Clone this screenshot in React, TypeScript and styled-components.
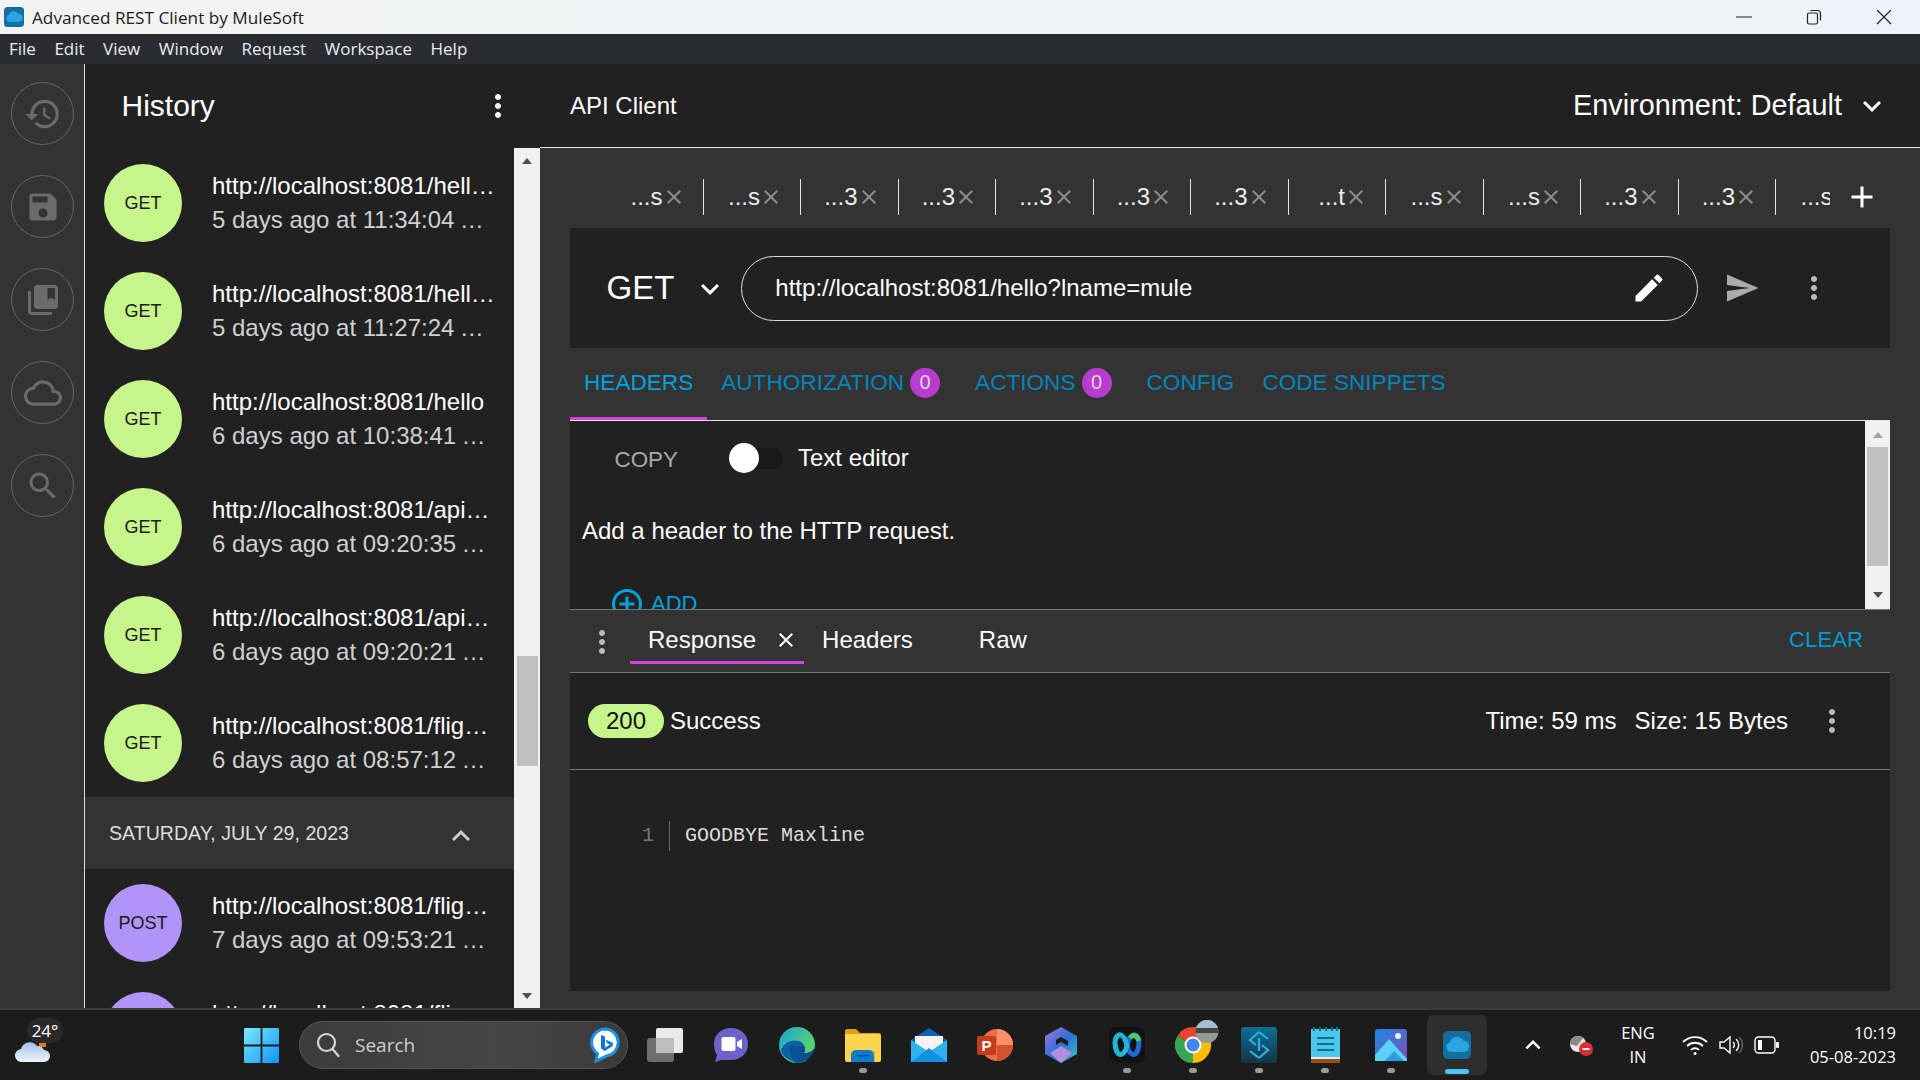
import React from 'react'
import styled, { createGlobalStyle } from 'styled-components'
import {
  MdAdd,
  MdAddCircleOutline,
  MdClose,
  MdCloudQueue,
  MdEdit,
  MdHistory,
  MdKeyboardArrowDown,
  MdKeyboardArrowUp,
  MdMoreVert,
  MdSave,
  MdSearch,
  MdSend,
} from 'react-icons/md'

const GlobalStyle = createGlobalStyle`
  html, body {
    margin: 0;
    padding: 0;
    background: #212121;
    font-family: "Liberation Sans", Arial, sans-serif;
  }
  * { box-sizing: border-box; }
`

const Page = styled.div`
  width: 1920px;
  height: 1080px;
  display: flex;
  flex-direction: column;
  overflow: hidden;
`

const TitleBar = styled.div`
  height: 34px;
  flex: none;
  display: flex;
  align-items: center;
  padding-left: 4px;
  background: linear-gradient(90deg, #f3f3f2 0%, #f1f3f5 50%, #edf3fa 100%);
  color: #1b1b1b;
  font-family: "Open Sans", sans-serif;
  font-size: 17.2px;
`

const TitleText = styled.span`
  margin-left: 8px;
`

const WindowButtons = styled.div`
  margin-left: auto;
  display: flex;
  align-items: center;
  gap: 54px;
  padding-right: 28px;
`

const MenuBar = styled.div`
  height: 30px;
  flex: none;
  display: flex;
  align-items: center;
  gap: 18.5px;
  padding: 0 0 2px 9px;
  background: #2a2c31;
  color: #e9edf1;
  font-family: "Open Sans", sans-serif;
  font-size: 17px;
`

const Main = styled.div`
  flex: 1;
  min-height: 0;
  display: flex;
`

const Rail = styled.nav`
  width: 85px;
  flex: none;
  padding: 18px 0 0 11px;
  background: #333;
  border-right: 1.5px solid #ddd;
  display: flex;
  flex-direction: column;
  gap: 30px;
`

const RailButton = styled.div`
  width: 63px;
  height: 63px;
  border-radius: 50%;
  border: 1px solid #666;
  color: #6b6b6b;
  display: flex;
  align-items: center;
  justify-content: center;
`

const HistoryPanel = styled.aside`
  width: 455px;
  flex: none;
  background: #212121;
  display: flex;
  flex-direction: column;
`

const HistoryHeader = styled.div`
  height: 84px;
  flex: none;
  display: flex;
  align-items: center;
  padding: 0 24px 0 36.5px;
  color: #fff;
  font-size: 30px;
  justify-content: space-between;
`

const HistoryBody = styled.div`
  flex: 1;
  min-height: 0;
  display: flex;
`

const HistoryList = styled.div`
  flex: 1;
  min-width: 0;
  overflow: hidden;
  padding-top: 1px;
`

const Row = styled.div`
  height: 108px;
  display: flex;
  align-items: center;
  padding: 0 18px 0 19px;
`

const Method = styled.div<{ $post?: boolean }>`
  width: 78px;
  height: 78px;
  flex: none;
  border-radius: 50%;
  background: ${({ $post }) => ($post ? '#b094f8' : '#c6f58b')};
  color: #1a1a1a;
  font-size: 18px;
  display: flex;
  align-items: center;
  justify-content: center;
`

const RowText = styled.div`
  margin-left: 30px;
  flex: 1;
  min-width: 0;
  font-size: 24px;
  line-height: 34.5px;
`

const RowUrl = styled.div`
  color: #fff;
  white-space: nowrap;
  overflow: hidden;
  text-overflow: ellipsis;
`

const RowDate = styled(RowUrl)`
  color: #d0d0d0;
`

const DayHeader = styled.div`
  height: 72px;
  display: flex;
  align-items: center;
  justify-content: space-between;
  padding: 0 35px 0 24px;
  background: #333;
  color: #ddd;
  font-size: 19.6px;
`

const DayChevron = styled.div`
  color: #ccc;
  height: 36px;
  margin-top: 6px;
`

const Track = styled.div<{ $width: number; $top: number; $bottom: number }>`
  width: ${({ $width }) => $width}px;
  flex: none;
  background: #f1f1f1;
  display: flex;
  flex-direction: column;
  align-items: center;
  padding: ${({ $top }) => $top}px 0 ${({ $bottom }) => $bottom}px;
`

const Thumb = styled.div<{ $offset: number; $height: number }>`
  width: 21px;
  height: ${({ $height }) => $height}px;
  margin-top: ${({ $offset }) => $offset}px;
  background: #c0c0c0;
`

const ArrowUp = styled.div<{ $faded?: boolean }>`
  width: 0;
  height: 0;
  border-left: 5.5px solid transparent;
  border-right: 5.5px solid transparent;
  border-bottom: 6px solid ${({ $faded }) => ($faded ? '#a3a3a3' : '#505050')};
`

const ArrowDown = styled.div`
  margin-top: auto;
  width: 0;
  height: 0;
  border-left: 5.5px solid transparent;
  border-right: 5.5px solid transparent;
  border-top: 6px solid #505050;
`

const Workspace = styled.main`
  flex: 1;
  min-width: 0;
  display: flex;
  flex-direction: column;
  background: #333;
`

const AppHeader = styled.header`
  height: 84px;
  flex: none;
  display: flex;
  align-items: center;
  justify-content: space-between;
  padding: 0 30px;
  background: #212121;
  border-bottom: 1px solid #e4e4e4;
  color: #fff;
  font-size: 24px;
`

const EnvSelect = styled.div`
  display: flex;
  align-items: center;
  gap: 12px;
  font-size: 28.8px;
`

const Body = styled.div`
  flex: 1;
  min-height: 0;
  display: flex;
  flex-direction: column;
  padding: 0 30px 17px;
`

const TabsRow = styled.div`
  height: 80px;
  flex: none;
  display: flex;
  align-items: flex-start;
  padding: 31px 0 0 36px;
`

const TabList = styled.div`
  width: 1224px;
  flex: none;
  display: flex;
  overflow: hidden;
`

const Tab = styled.div`
  width: 97.5px;
  height: 36px;
  flex: none;
  display: flex;
  align-items: center;
  justify-content: flex-end;
  padding-right: 17px;
  border-right: 1.5px solid #e4e4e4;
  color: #eee;
  font-size: 24px;
`

const TabClose = styled.span`
  color: #8c8c8c;
  display: flex;
  margin-left: -1px;
`

const PlusButton = styled.div`
  margin-left: 14px;
  height: 36px;
  color: #fff;
`

const UrlBar = styled.div`
  height: 120px;
  flex: none;
  display: flex;
  align-items: center;
  padding-left: 36.5px;
  background: #212121;
  color: #fff;
`

const MethodLabel = styled.span`
  font-size: 33px;
`

const MethodChevron = styled.span`
  display: flex;
  margin: 2px 12.5px 0 18px;
`

const UrlInput = styled.div`
  width: 957.5px;
  height: 65px;
  flex: none;
  display: flex;
  align-items: center;
  justify-content: space-between;
  padding: 0 30px 0 33.5px;
  border: 1px solid #ddd;
  border-radius: 33px;
  font-size: 24px;
`

const IconSlot = styled.span<{ $left?: number; $color?: string }>`
  display: flex;
  flex: none;
  margin-left: ${({ $left }) => $left ?? 0}px;
  color: ${({ $color }) => $color ?? '#bbb'};
`

const RequestTabs = styled.div`
  height: 72px;
  flex: none;
  display: flex;
`

const RequestTab = styled.div<{ $active?: boolean }>`
  display: flex;
  align-items: center;
  padding: 0 14px;
  font-size: 22.6px;
  color: ${({ $active }) => ($active ? '#00a2df' : '#0086bd')};
  border-bottom: 3px solid ${({ $active }) => ($active ? '#d63fe0' : 'transparent')};
`

const Badge = styled.span`
  width: 30px;
  height: 30px;
  margin: 0 7px 0 6px;
  border-radius: 50%;
  background: #b93bd0;
  color: #d9d9d9;
  display: flex;
  align-items: center;
  justify-content: center;
  font-size: 20px;
`

const RequestPanel = styled.section`
  height: 190px;
  flex: none;
  display: flex;
  background: #212121;
  border-top: 1px solid #e4e4e4;
  border-bottom: 1px solid #777;
`

const RequestContent = styled.div`
  flex: 1;
  min-width: 0;
  overflow: hidden;
  padding: 19px 0 0 12px;
`

const EditorRow = styled.div`
  height: 36px;
  display: flex;
  align-items: center;
  padding-left: 32.5px;
  color: #fff;
  font-size: 24px;
`

const CopyButton = styled.span`
  font-size: 22.4px;
  color: #aaa;
  margin-top: 3px;
`

const Toggle = styled.div`
  position: relative;
  width: 51px;
  height: 21px;
  margin: 0 15px 0 54px;
  border-radius: 11px;
  background: #191919;
`

const ToggleKnob = styled.div`
  position: absolute;
  left: -3px;
  top: -5px;
  width: 30px;
  height: 30px;
  border-radius: 50%;
  background: #fff;
`

const HelpText = styled.p`
  margin: 41px 0 0;
  color: #fff;
  font-size: 24px;
  line-height: 28px;
`

const AddRow = styled.div`
  margin: 41px 0 0 27px;
  display: flex;
  align-items: center;
  color: #00a2df;
  font-size: 22px;
`

const AddLabel = styled.span`
  margin-left: 6px;
`

const ResponseBar = styled.div`
  height: 63px;
  flex: none;
  display: flex;
  align-items: flex-start;
  padding-left: 14px;
  border-bottom: 1px solid #777;
`

const BarDots = styled.span`
  display: flex;
  margin: 14px 10px 0 0;
  color: #bbb;
`

const ResponseTab = styled.div<{ $active?: boolean }>`
  height: 54px;
  display: flex;
  align-items: center;
  padding: 9px 6px 0 18px;
  color: #fff;
  font-size: 24px;
  border-bottom: 3px solid ${({ $active }) => ($active ? '#d63fe0' : 'transparent')};
`

const ResponseClose = styled.span<{ $hidden?: boolean }>`
  display: flex;
  margin-left: 18px;
  visibility: ${({ $hidden }) => ($hidden ? 'hidden' : 'visible')};
`

const ClearButton = styled.span`
  margin: 17px 27px 0 auto;
  color: #009ad6;
  font-size: 22.2px;
`

const StatusRow = styled.div`
  height: 97px;
  flex: none;
  display: flex;
  align-items: center;
  padding: 0 40px 0 18px;
  background: #212121;
  border-bottom: 1px solid #777;
  color: #fff;
  font-size: 24px;
`

const StatusPill = styled.span`
  width: 76px;
  height: 34px;
  border-radius: 17px;
  background: #c6f58b;
  color: #111;
  display: flex;
  align-items: center;
  justify-content: center;
  margin-right: 6px;
`

const Timing = styled.span`
  margin-left: auto;
  display: flex;
  gap: 18px;
`

const EditorArea = styled.div`
  flex: 1;
  min-height: 0;
  display: flex;
  align-items: flex-start;
  padding-top: 51px;
  background: #212121;
  font-family: "Liberation Mono", "Courier New", monospace;
  font-size: 20px;
  line-height: 30px;
`

const Gutter = styled.div`
  width: 100px;
  padding-right: 15px;
  text-align: right;
  color: #777;
  border-right: 1px solid #666;
`

const Code = styled.div`
  padding-left: 15px;
  color: #ddd;
`

const Taskbar = styled.footer`
  height: 72px;
  flex: none;
  display: flex;
  align-items: center;
  background: #1c1c1c;
  border-top: 2px solid #3b3b3b;
  color: #fff;
  font-family: "Open Sans", "Noto Sans", sans-serif;
`

const Weather = styled.div`
  position: relative;
  width: 228px;
  height: 100%;
  flex: none;
`

const WeatherCloud = styled.svg`
  position: absolute;
  left: 15px;
  top: 30px;
`

const WeatherBadge = styled.div`
  position: absolute;
  left: 27px;
  top: 8px;
  width: 36px;
  height: 25px;
  border-radius: 13px;
  background: #2a2a2a;
  display: flex;
  align-items: center;
  justify-content: center;
  font-size: 17px;
`

const SearchBox = styled.div`
  width: 329px;
  height: 48px;
  flex: none;
  margin: 0 4px 0 5px;
  display: flex;
  align-items: center;
  padding: 0 7px 0 16px;
  border-radius: 24px;
  border: 1px solid #565656;
  background: linear-gradient(90deg, #3c3c3c, #454545 60%, #3a3a3a);
  color: #cfcfcf;
  font-size: 19px;
`

const SearchLabel = styled.span`
  margin-left: 15px;
  flex: 1;
`

const AppSlot = styled.div<{ $active?: boolean }>`
  position: relative;
  width: 66px;
  height: 60px;
  flex: none;
  display: flex;
  align-items: center;
  justify-content: center;
  border-radius: 8px;
  border-left: 3px solid transparent;
  border-right: 3px solid transparent;
  background: ${({ $active }) => ($active ? '#2e2e2e' : 'transparent')};
  background-clip: padding-box;
`

const ChromeWrap = styled.span`
  display: flex;
  margin: 0 0 12px 8px;
`

const RunDot = styled.span<{ $active?: boolean }>`
  position: absolute;
  bottom: ${({ $active }) => ($active ? 1 : 2)}px;
  left: 50%;
  transform: translateX(-50%);
  width: ${({ $active }) => ($active ? 24 : 8)}px;
  height: 5px;
  border-radius: 3px;
  background: ${({ $active }) => ($active ? '#4cc2ff' : '#9a9a9a')};
`

const Tray = styled.div`
  flex: 1;
  display: flex;
  align-items: center;
  padding-left: 28px;
`

const TrayLang = styled.div`
  margin-left: 19px;
  width: 50px;
  text-align: center;
  font-size: 16.5px;
  line-height: 24px;
`

const TrayIcons = styled.div`
  margin-left: 19px;
  display: flex;
  align-items: center;
  gap: 11px;
`

const Clock = styled.div`
  margin-left: auto;
  padding-right: 24px;
  text-align: right;
  white-space: nowrap;
  font-size: 16.5px;
  line-height: 24px;
`

const rows = [
  { method: 'GET', url: 'http://localhost:8081/hello?fname=Max', date: '5 days ago at 11:34:04 AM IST' },
  { method: 'GET', url: 'http://localhost:8081/hello?lname=mule', date: '5 days ago at 11:27:24 AM IST' },
  { method: 'GET', url: 'http://localhost:8081/hello', date: '6 days ago at 10:38:41 AM IST' },
  { method: 'GET', url: 'http://localhost:8081/apis/customers', date: '6 days ago at 09:20:35 AM IST' },
  { method: 'GET', url: 'http://localhost:8081/apis/orders', date: '6 days ago at 09:20:21 AM IST' },
  { method: 'GET', url: 'http://localhost:8081/flights', date: '6 days ago at 08:57:12 AM IST' },
]

const oldRows = [
  { method: 'POST', url: 'http://localhost:8081/flights', date: '7 days ago at 09:53:21 AM IST' },
  { method: 'POST', url: 'http://localhost:8081/flights', date: '7 days ago at 09:50:02 AM IST' },
]

const tabs = ['s', 's', '3', '3', '3', '3', '3', 't', 's', 's', '3', '3', 's']

const HistoryRow = ({ method, url, date }: { method: string; url: string; date: string }) => (
  <Row>
    <Method $post={method === 'POST'}>{method}</Method>
    <RowText>
      <RowUrl>{url}</RowUrl>
      <RowDate>{date}</RowDate>
    </RowText>
  </Row>
)

const CollectionsIcon = () => (
  <svg width="36" height="36" viewBox="0 0 24 24" fill="currentColor">
    <path d="M4 6H2v14c0 1.1.9 2 2 2h14v-2H4V6zm16-4H8c-1.1 0-2 .9-2 2v12c0 1.1.9 2 2 2h12c1.1 0 2-.9 2-2V4c0-1.1-.9-2-2-2zm0 10l-2.5-1.5L15 12V4h5v8z" />
  </svg>
)

const ArcLogo = ({ size }: { size: number }) => (
  <svg width={size} height={size} viewBox="0 0 28 28">
    <rect width="28" height="28" rx="5" fill="#126f9f" />
    <path d="M8 21a5 5 0 0 1-1-9.8A7 7 0 0 1 20 9.6a5.7 5.7 0 0 1 1 11.4z" fill="#2aa5e2" />
  </svg>
)

const StartIcon = () => (
  <svg width="35" height="35" viewBox="0 0 35 35">
    <defs>
      <linearGradient id="win" x1="0" y1="0" x2="1" y2="1">
        <stop offset="0" stopColor="#7ee8ff" />
        <stop offset="1" stopColor="#0b96f5" />
      </linearGradient>
    </defs>
    <path d="M0 1a1 1 0 0 1 1-1h15.6v16.6H0zM18.4 0H34a1 1 0 0 1 1 1v15.6H18.4zM0 18.4h16.6V35H1a1 1 0 0 1-1-1zM18.4 18.4H35V34a1 1 0 0 1-1 1H18.4z" fill="url(#win)" />
  </svg>
)

const SearchGlass = () => (
  <svg width="24" height="26" viewBox="0 0 24 26" fill="none" stroke="#d8d8d8" strokeWidth="2.200">
    <circle cx="10.500" cy="10.500" r="8.500" />
    <path d="M16.500 17l6 7" strokeLinecap="round" />
  </svg>
)

const BingIcon = () => (
  <svg width="30" height="36" viewBox="0 0 30 36">
    <path d="M15 2a13.5 13.5 0 0 1 2 26.8L6 34l1.6-7.3A13.5 13.5 0 0 1 15 2z" fill="#fff" stroke="#1d8fe8" strokeWidth="3" />
    <path d="M11 8l4 1.5v11l5-3-3-1.2-1.2-3.6 7 3V19l-8 5-3.800-2.500z" fill="#1473d8" />
  </svg>
)

const TaskViewIcon = () => (
  <svg width="36" height="34" viewBox="0 0 36 34">
    <rect x="0" y="10" width="27" height="24" rx="3" fill="#6e6e6e" />
    <rect x="9" y="0" width="27" height="25" rx="2" fill="#e9e9e9" />
    <rect x="9" y="10" width="18" height="15" fill="#bdbdbd" />
  </svg>
)

const MeetIcon = () => (
  <svg width="34" height="36" viewBox="0 0 34 36">
    <path d="M17 1c9 0 17 6 17 16s-8 16-17 16H7l-6 2 2-7C1 25 0 21 0 17 0 7 8 1 17 1z" fill="#6b63c9" />
    <rect x="7.500" y="10" width="14" height="14" rx="2" fill="#fff" />
    <path d="M23 15l5-3v10l-5-3z" fill="#fff" />
  </svg>
)

const EdgeIcon = () => (
  <svg width="36" height="36" viewBox="0 0 36 36">
    <defs>
      <linearGradient id="edge" x1="0" y1="0" x2="1" y2="0.6">
        <stop offset="0" stopColor="#1aa3d8" />
        <stop offset="1" stopColor="#5fd56a" />
      </linearGradient>
    </defs>
    <circle cx="18" cy="18" r="18" fill="url(#edge)" />
    <path d="M2 24c2-8 10-12 18-10 3 1 5 3 5 5H15c-3 0-5 2-4 5 1 5 7 10 16 9a18 18 0 0 1-25-9z" fill="#0c5ea8" />
    <path d="M36 20c-2 5-8 7-12 6 2-1 3-3 1-7H15c-3 0-5 2-4 5 1 5 7 10 16 9l3 1c3-3 5-8 6-14z" fill="#1c1c1c" />
    <path d="M15 19h10c2 4 1 6-1 7 4 1 10-1 12-6-2 9-9 16-18 16-1 0-5-1-7-12-1-3 1-5 4-5z" fill="#0b4f96" />
  </svg>
)

const FilesIcon = () => (
  <svg width="36" height="34" viewBox="0 0 36 34">
    <path d="M0 3a2 2 0 0 1 2-2h9l4 4h19a2 2 0 0 1 2 2v5H0z" fill="#e0a10f" />
    <path d="M0 6h34a2 2 0 0 1 2 2v24a2 2 0 0 1-2 2H2a2 2 0 0 1-2-2z" fill="#fdd44f" />
    <rect x="6" y="23" width="24" height="11" fill="#f4b81f" />
    <path d="M6 34a2 2 0 0 1-0-1V27a5 5 0 0 1 5-5h13a5 5 0 0 1 5 5v7z" fill="#0c7bd0" />
    <rect x="12" y="27" width="12" height="1.500" fill="#083f73" />
  </svg>
)

const MailIcon = () => (
  <svg width="36" height="34" viewBox="0 0 36 34">
    <path d="M18 0L36 12v5H0v-5z" fill="#0b62b5" />
    <path d="M4 8h28v14H4z" fill="#f4f4f4" />
    <path d="M0 12l18 12L36 12v22H0z" fill="#2fb1f2" />
    <path d="M0 34L18 20l18 14z" fill="#1291e0" />
  </svg>
)

const PowerPointIcon = () => (
  <svg width="36" height="34" viewBox="0 0 36 34">
    <circle cx="20" cy="17" r="16" fill="#ed6c47" />
    <path d="M20 1a16 16 0 0 1 16 16H20z" fill="#ff8f6b" />
    <path d="M20 17h16a16 16 0 0 1-16 16z" fill="#d35230" />
    <rect x="0" y="8" width="19" height="19" rx="2" fill="#c43e1c" />
    <text x="9.500" y="23" textAnchor="middle" fontFamily="Liberation Sans" fontWeight="700" fontSize="15" fill="#fff">P</text>
  </svg>
)

const M365Icon = () => (
  <svg width="32" height="36" viewBox="0 0 32 36">
    <defs>
      <linearGradient id="m365" x1="0" y1="0" x2="1" y2="1">
        <stop offset="0" stopColor="#a974e0" />
        <stop offset="0.5" stopColor="#2f6fd6" />
        <stop offset="1" stopColor="#3ac3c4" />
      </linearGradient>
    </defs>
    <path d="M16 0l16 9v18l-16 9-16-9V9z" fill="url(#m365)" />
    <path d="M16 10l7 4v5l-7-4-5 3v-5z" fill="#1c1c1c" />
    <path d="M5 26l11-7 11 7-11 10z" fill="#b58ae0" />
  </svg>
)

const WebexIcon = () => (
  <svg width="36" height="36" viewBox="0 0 36 36">
    <rect width="36" height="36" rx="7" fill="#101214" />
    <path d="M30 14C30 31 21 31 18 19C21 5 28 5 30 14" fill="none" stroke="#2468d8" strokeWidth="5" />
    <path d="M6 14C6 31 15 31 18 19C15 5 8 5 6 14" fill="none" stroke="#1eb6d8" strokeWidth="5" />
    <path d="M21 11C24 7 28 8 30 14" fill="none" stroke="#58c46c" strokeWidth="5" />
  </svg>
)

const ChromeIcon = () => (
  <svg width="44" height="48" viewBox="0 0 44 48">
    <defs>
      <clipPath id="avatar">
        <circle cx="32" cy="16.600" r="11.500" />
      </clipPath>
    </defs>
    <path d="M18 30L2.400 21A18 18 0 0 1 33.600 21z" fill="#ea4335" />
    <path d="M18 30L33.600 21A18 18 0 0 1 18 48z" fill="#fbbc04" />
    <path d="M18 30L18 48A18 18 0 0 1 2.400 21z" fill="#34a853" />
    <circle cx="18" cy="30" r="8.500" fill="#fff" />
    <circle cx="18" cy="30" r="6.500" fill="#4285f4" />
    <g clipPath="url(#avatar)">
      <rect x="20" y="5" width="24" height="24" fill="#969a90" />
      <rect x="20" y="5" width="24" height="9" fill="#a9bdd6" />
      <rect x="20" y="13" width="24" height="5" fill="#43453f" />
    </g>
  </svg>
)

const TransferIcon = () => (
  <svg width="36" height="36" viewBox="0 0 36 36">
    <defs>
      <linearGradient id="transfer" x1="0" y1="0" x2="0" y2="1">
        <stop offset="0" stopColor="#0d6f96" />
        <stop offset="1" stopColor="#143645" />
      </linearGradient>
    </defs>
    <rect width="36" height="36" rx="3" fill="url(#transfer)" />
    <g fill="none" stroke="#27b2e6" strokeWidth="2.200">
      <path d="M18 5l-9 8 6 5M18 31l9-8-6-5" />
      <path d="M18 5l9 7M18 31l-9-7M18 11v13" />
    </g>
  </svg>
)

const NotepadIcon = () => (
  <svg width="29" height="36" viewBox="0 0 29 36">
    <rect y="2" width="29" height="29" fill="#4dc6ec" />
    <rect y="31" width="29" height="5" fill="#9c4f14" />
    <rect y="30" width="29" height="2" fill="#e8e8e8" />
    <path d="M3 0v4M9 0v4M15 0v4M21 0v4M26 0v4" stroke="#0b6f8e" strokeWidth="2" />
    <path d="M6 11h17M6 17h17M6 23h17" stroke="#0b6f8e" strokeWidth="2" />
  </svg>
)

const PhotosIcon = () => (
  <svg width="32" height="32" viewBox="0 0 32 32">
    <defs>
      <linearGradient id="photos" x1="0" y1="0" x2="1" y2="1">
        <stop offset="0" stopColor="#1d88e5" />
        <stop offset="1" stopColor="#7d4fb8" />
      </linearGradient>
    </defs>
    <rect width="32" height="32" rx="3" fill="url(#photos)" />
    <circle cx="23" cy="7" r="3" fill="#e6eef7" />
    <path d="M0 26L14 10l18 20v2H0z" fill="#5cd1f8" />
    <path d="M10 32l9-10 10 10z" fill="#2b9fe6" />
  </svg>
)

const OneDriveOff = () => (
  <svg width="26" height="22" viewBox="0 0 26 22">
    <circle cx="10" cy="10" r="8" fill="#e6e6e6" />
    <path d="M2 10a8 8 0 0 1 13-6l-6 8z" fill="#8a8a8a" />
    <circle cx="18" cy="15" r="7" fill="#dc2f35" />
    <rect x="14.500" y="14" width="7" height="2" fill="#fff" />
  </svg>
)

const WifiIcon = () => (
  <svg width="26" height="22" viewBox="0 0 26 22" fill="none" stroke="#fff" strokeWidth="1.800">
    <path d="M1 8a17 17 0 0 1 24 0M5 12a11.500 11.500 0 0 1 16 0M9 16a5.500 5.500 0 0 1 8 0" />
    <circle cx="13" cy="19.500" r="1.500" fill="#fff" stroke="none" />
  </svg>
)

const SpeakerIcon = () => (
  <svg width="24" height="22" viewBox="0 0 24 22" fill="none" stroke="#fff" strokeWidth="1.400">
    <path d="M1 8v6h4l6 5V3L5 8z" />
    <path d="M14 8a4 4 0 0 1 0 6M17 5a8 8 0 0 1 0 12" />
    <path d="M20 3a11 11 0 0 1 0 16" stroke="#666" />
  </svg>
)

const BatteryIcon = () => (
  <svg width="25" height="18" viewBox="0 0 25 18" fill="none">
    <rect x="1" y="1" width="20" height="16" rx="3.500" stroke="#fff" strokeWidth="1.400" />
    <rect x="4" y="4" width="4" height="10" fill="#fff" />
    <rect x="22" y="6" width="3" height="6" rx="1" fill="#fff" />
  </svg>
)

const apps: { icon: React.ReactNode; running?: boolean }[] = [
  { icon: <TaskViewIcon /> },
  { icon: <MeetIcon /> },
  { icon: <EdgeIcon /> },
  { icon: <FilesIcon />, running: true },
  { icon: <MailIcon /> },
  { icon: <PowerPointIcon /> },
  { icon: <M365Icon /> },
  { icon: <WebexIcon />, running: true },
  { icon: <ChromeWrap><ChromeIcon /></ChromeWrap>, running: true },
  { icon: <TransferIcon />, running: true },
  { icon: <NotepadIcon />, running: true },
  { icon: <PhotosIcon />, running: true },
]

const App = () => (
  <Page>
    <GlobalStyle />
    <TitleBar>
      <ArcLogo size={20} />
      <TitleText>Advanced REST Client by MuleSoft</TitleText>
      <WindowButtons>
        <svg width="16" height="16" viewBox="0 0 16 16">
          <path d="M0 8h16" stroke="#222" strokeWidth="1" />
        </svg>
        <svg width="16" height="16" viewBox="0 0 16 16" fill="none" stroke="#222" strokeWidth="1.200">
          <rect x="1.500" y="4" width="10" height="11" rx="1.500" />
          <path d="M4.500 1.500h7a3 3 0 0 1 3 3v7" />
        </svg>
        <svg width="16" height="16" viewBox="0 0 16 16">
          <path d="M1 1l14 14M15 1L1 15" stroke="#222" strokeWidth="1.100" />
        </svg>
      </WindowButtons>
    </TitleBar>
    <MenuBar>
      {['File', 'Edit', 'View', 'Window', 'Request', 'Workspace', 'Help'].map((item) => (
        <span key={item}>{item}</span>
      ))}
    </MenuBar>
    <Main>
      <Rail>
        <RailButton><MdHistory size={38} /></RailButton>
        <RailButton><MdSave size={36} /></RailButton>
        <RailButton><CollectionsIcon /></RailButton>
        <RailButton><MdCloudQueue size={38} /></RailButton>
        <RailButton><MdSearch size={36} /></RailButton>
      </Rail>
      <HistoryPanel>
        <HistoryHeader>
          <span>History</span>
          <MdMoreVert size={36} />
        </HistoryHeader>
        <HistoryBody>
          <HistoryList>
            {rows.map((row) => (
              <HistoryRow key={row.date} {...row} />
            ))}
            <DayHeader>
              <span>SATURDAY, JULY 29, 2023</span>
              <DayChevron><MdKeyboardArrowUp size={36} /></DayChevron>
            </DayHeader>
            {oldRows.map((row) => (
              <HistoryRow key={row.date} {...row} />
            ))}
          </HistoryList>
          <Track $width={26} $top={10} $bottom={9}>
            <ArrowUp />
            <Thumb $offset={492} $height={110} />
            <ArrowDown />
          </Track>
        </HistoryBody>
      </HistoryPanel>
      <Workspace>
        <AppHeader>
          <span>API Client</span>
          <EnvSelect>
            Environment: Default
            <MdKeyboardArrowDown size={36} />
          </EnvSelect>
        </AppHeader>
        <Body>
          <TabsRow>
            <TabList>
              {tabs.map((end, i) => (
                <Tab key={i}>
                  ...{end}
                  <TabClose><MdClose size={24} /></TabClose>
                </Tab>
              ))}
            </TabList>
            <PlusButton><MdAdd size={36} /></PlusButton>
          </TabsRow>
          <UrlBar>
            <MethodLabel>GET</MethodLabel>
            <MethodChevron><MdKeyboardArrowDown size={36} /></MethodChevron>
            <UrlInput>
              <span>http://localhost:8081/hello?lname=mule</span>
              <MdEdit size={36} />
            </UrlInput>
            <IconSlot $left={25.5} $color="#ababab"><MdSend size={36} /></IconSlot>
            <IconSlot $left={36}><MdMoreVert size={36} /></IconSlot>
          </UrlBar>
          <RequestTabs>
            <RequestTab $active>HEADERS</RequestTab>
            <RequestTab>AUTHORIZATION<Badge>0</Badge></RequestTab>
            <RequestTab>ACTIONS<Badge>0</Badge></RequestTab>
            <RequestTab>CONFIG</RequestTab>
            <RequestTab>CODE SNIPPETS</RequestTab>
          </RequestTabs>
          <RequestPanel>
            <RequestContent>
              <EditorRow>
                <CopyButton>COPY</CopyButton>
                <Toggle><ToggleKnob /></Toggle>
                Text editor
              </EditorRow>
              <HelpText>Add a header to the HTTP request.</HelpText>
              <AddRow>
                <MdAddCircleOutline size={36} />
                <AddLabel>ADD</AddLabel>
              </AddRow>
            </RequestContent>
            <Track $width={25} $top={11} $bottom={11}>
              <ArrowUp $faded />
              <Thumb $offset={9} $height={119} />
              <ArrowDown />
            </Track>
          </RequestPanel>
          <ResponseBar>
            <BarDots><MdMoreVert size={36} /></BarDots>
            <ResponseTab $active>
              Response
              <ResponseClose><MdClose size={24} /></ResponseClose>
            </ResponseTab>
            <ResponseTab>
              Headers
              <ResponseClose $hidden><MdClose size={24} /></ResponseClose>
            </ResponseTab>
            <ResponseTab>Raw</ResponseTab>
            <ClearButton>CLEAR</ClearButton>
          </ResponseBar>
          <StatusRow>
            <StatusPill>200</StatusPill>
            Success
            <Timing>
              <span>Time: 59 ms</span>
              <span>Size: 15 Bytes</span>
            </Timing>
            <IconSlot $left={26}><MdMoreVert size={36} /></IconSlot>
          </StatusRow>
          <EditorArea>
            <Gutter>1</Gutter>
            <Code>GOODBYE Maxline</Code>
          </EditorArea>
        </Body>
      </Workspace>
    </Main>
    <Taskbar>
      <Weather>
        <WeatherCloud width="36" height="22" viewBox="0 0 36 22">
          <defs>
            <linearGradient id="cloud" x1="0" y1="0" x2="0" y2="1">
              <stop offset="0" stopColor="#9fc0f0" />
              <stop offset="1" stopColor="#f1f4fb" />
            </linearGradient>
          </defs>
          <path d="M24 3h7v4h-7z" fill="#e9761e" />
          <path d="M7 22a6.500 6.500 0 0 1-1-13A9 9 0 0 1 22 6a7 7 0 0 1 7 4 6 6 0 0 1 0 12z" fill="url(#cloud)" />
        </WeatherCloud>
        <WeatherBadge>24°</WeatherBadge>
      </Weather>
      <AppSlot><StartIcon /></AppSlot>
      <SearchBox>
        <SearchGlass />
        <SearchLabel>Search</SearchLabel>
        <BingIcon />
      </SearchBox>
      {apps.map((app, i) => (
        <AppSlot key={i}>
          {app.icon}
          {app.running && <RunDot />}
        </AppSlot>
      ))}
      <AppSlot $active>
        <ArcLogo size={28} />
        <RunDot $active />
      </AppSlot>
      <Tray>
        <MdKeyboardArrowUp size={30} />
        <IconSlot $left={20}><OneDriveOff /></IconSlot>
        <TrayLang>ENG<br />IN</TrayLang>
        <TrayIcons>
          <WifiIcon />
          <SpeakerIcon />
          <BatteryIcon />
        </TrayIcons>
        <Clock>10:19<br />05-08-2023</Clock>
      </Tray>
    </Taskbar>
  </Page>
)

export default App
